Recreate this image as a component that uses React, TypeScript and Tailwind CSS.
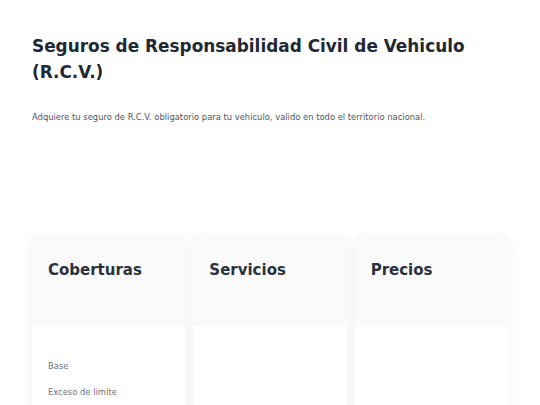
export default function App() {
  const cards = [
    { title: "Coberturas", items: ["Base", "Exceso de limite"] },
    { title: "Servicios", items: [] as string[] },
    { title: "Precios", items: [] as string[] },
  ];
  return (
    <div className="min-h-screen bg-white px-8 pt-[33px] text-[#1f2933]" style={{ fontFamily: '"DejaVu Sans", sans-serif' }}>
      <h1 className="text-[16.9px] font-bold leading-[26px] w-[476px]">
        Seguros de Responsabilidad Civil de Vehiculo (R.C.V.)
      </h1>
      <p className="mt-[26px] text-[8.4px] leading-[12px] text-[#4b5563]">
        Adquiere tu seguro de R.C.V. obligatorio para tu vehiculo, valido en todo el territorio nacional.
      </p>
      <div className="mt-[113px] grid grid-cols-3 gap-2 w-[476px]">
        {cards.map((c) => (
          <div key={c.title} className="bg-white rounded-sm shadow-[0_2px_10px_rgba(0,0,0,0.07)] overflow-hidden h-[200px]">
            <div className="bg-[#fafafa] h-[90px] px-4 pt-[23px]">
              <h2 className="text-[15px] font-bold text-[#2a333d]">{c.title}</h2>
            </div>
            <ul className="px-4 pt-[34px] flex flex-col gap-[14px]">
              {c.items.map((i) => (
                <li key={i} className="text-[8.4px] leading-[12px] text-[#6b7280]">{i}</li>
              ))}
            </ul>
          </div>
        ))}
      </div>
    </div>
  );
}
